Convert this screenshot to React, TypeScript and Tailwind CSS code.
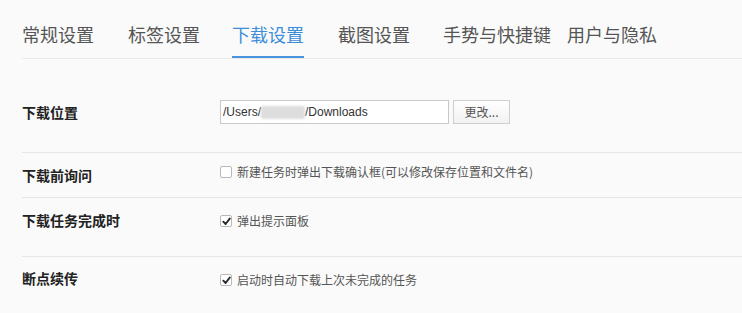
import React from "react"

const tabs = [
  { name: "常规设置", cls: "" },
  { name: "标签设置", cls: "ml-[34px]" },
  { name: "下载设置", cls: "ml-[32px]", active: true },
  { name: "截图设置", cls: "ml-[34px]" },
  { name: "手势与快捷键", cls: "ml-[33px]" },
  { name: "用户与隐私", cls: "ml-[16px]" },
]

function Check({ checked }: { checked?: boolean }) {
  return (
    <span className="flex h-[12px] w-[12px] shrink-0 items-center justify-center rounded-[2px] border border-[#b9b9b9] bg-white">
      {checked && (
        <svg width="9" height="9" viewBox="0 0 10 10">
          <path d="M1.5 5.2 L4 7.8 L8.6 1.8" fill="none" stroke="#2a2a2a" strokeWidth="2.1" strokeLinecap="round" strokeLinejoin="round" />
        </svg>
      )}
    </span>
  )
}

function Option({ checked, text }: { checked?: boolean; text: string }) {
  return (
    <label className="flex items-center gap-[5px] text-[12px] leading-[20px] text-[#555]">
      <Check checked={checked} />
      <span>{text}</span>
    </label>
  )
}

export default function App() {
  return (
    <div
      className="h-[313px] w-[742px] overflow-hidden bg-[#fafafa] pl-[22px]"
      style={{ fontFamily: '"Noto Sans CJK SC", "Liberation Sans", sans-serif' }}
    >
      <div className="flex border-b border-[#ebebeb] pt-[22px]">
        {tabs.map((t) => (
          <div
            key={t.name}
            className={`${t.cls} border-b-2 pb-[10px] text-[18px] leading-[24px] ${
              t.active ? "border-[#4a94dd] text-[#3e8ddb]" : "border-transparent text-[#555]"
            }`}
          >
            {t.name}
          </div>
        ))}
      </div>

      <div className="flex h-[93px]">
        <div className="w-[198px] pt-[43px] text-[14px] font-bold leading-[20px] text-[#222]">下载位置</div>
        <div className="flex gap-[4px] pt-[41px]">
          <div
            className="flex h-[24px] w-[229px] items-center border border-[#c8c8c8] bg-white px-[2px] text-[12px] text-[#333]"
            style={{ fontFamily: '"Liberation Sans", sans-serif' }}
          >
            <span>/Users/</span>
            <span className="h-[13px] w-[44px] rounded-[2px] bg-[#dddddd] blur-[1px]" />
            <span>/Downloads</span>
          </div>
          <button className="h-[24px] w-[57px] border border-[#cfcfcf] bg-gradient-to-b from-white to-[#f1f1f1] text-[12px] text-[#555]">
            更改...
          </button>
        </div>
      </div>

      <div className="flex h-[45px] border-t border-[#e6e6e6]">
        <div className="w-[198px] pt-[12px] text-[14px] font-bold leading-[20px] text-[#222]">下载前询问</div>
        <div className="pt-[9px]">
          <Option text="新建任务时弹出下载确认框(可以修改保存位置和文件名)" />
        </div>
      </div>

      <div className="flex h-[59px] border-t border-[#e6e6e6]">
        <div className="w-[198px] pt-[12px] text-[14px] font-bold leading-[20px] text-[#222]">下载任务完成时</div>
        <div className="pt-[13px]">
          <Option checked text="弹出提示面板" />
        </div>
      </div>

      <div className="flex h-[60px] border-t border-[#e6e6e6]">
        <div className="w-[198px] pt-[11px] text-[14px] font-bold leading-[20px] text-[#222]">断点续传</div>
        <div className="pt-[13px]">
          <Option checked text="启动时自动下载上次未完成的任务" />
        </div>
      </div>
    </div>
  )
}
